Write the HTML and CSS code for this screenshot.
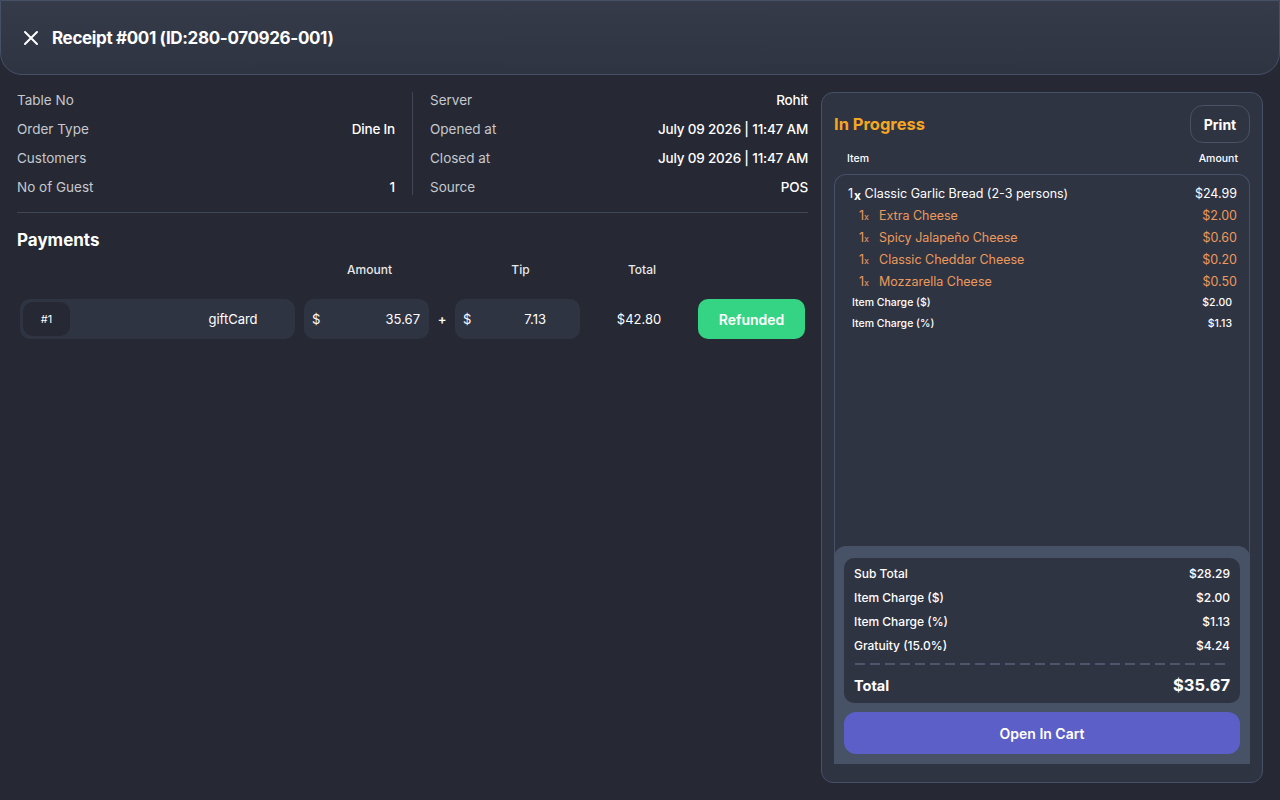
FILE: index.html
```html
<!DOCTYPE html>
<html>
<head>
    <meta name="viewport" content="width=device-width, initial-scale=1">
    <link rel="stylesheet" href="styles.css">
</head>

<body>
    <div class="header">
        <svg class="closeIcon" width="16" height="16" viewBox="0 0 16 16">
            <path d="M2 2 L14 14 M14 2 L2 14" stroke="#ffffff" stroke-width="2" stroke-linecap="round" />
        </svg>
        <span class="headerTitle">Receipt #001 (ID:280-070926-001)</span>
    </div>

    <div class="content">
        <div class="leftSide">
            <div class="infoGrid">
                <div class="infoCol">
                    <div class="infoRow"><span class="infoLabel">Table No</span><span class="infoValue"></span></div>
                    <div class="infoRow"><span class="infoLabel">Order Type</span><span class="infoValue">Dine In</span></div>
                    <div class="infoRow"><span class="infoLabel">Customers</span><span class="infoValue"></span></div>
                    <div class="infoRow"><span class="infoLabel">No of Guest</span><span class="infoValue">1</span></div>
                </div>
                <div class="infoDivider"></div>
                <div class="infoCol">
                    <div class="infoRow"><span class="infoLabel">Server</span><span class="infoValue">Rohit</span></div>
                    <div class="infoRow"><span class="infoLabel">Opened at</span><span class="infoValue">July 09 2026 | 11:47 AM</span></div>
                    <div class="infoRow"><span class="infoLabel">Closed at</span><span class="infoValue">July 09 2026 | 11:47 AM</span></div>
                    <div class="infoRow"><span class="infoLabel">Source</span><span class="infoValue">POS</span></div>
                </div>
            </div>

            <h2 class="sectionTitle">Payments</h2>

            <div class="payHead">
                <span class="colMethod"></span>
                <span class="colAmount">Amount</span>
                <span class="colPlus"></span>
                <span class="colTip">Tip</span>
                <span class="colTotal">Total</span>
                <span class="colStatus"></span>
            </div>
            <div class="payRow">
                <div class="colMethod methodBox">
                    <span class="payIndex">#1</span>
                    <span class="payMethod">giftCard</span>
                </div>
                <div class="colAmount moneyBox"><span>$</span><span>35.67</span></div>
                <div class="colPlus">+</div>
                <div class="colTip moneyBox tipBox"><span>$</span><span>7.13</span></div>
                <div class="colTotal">$42.80</div>
                <div class="colStatus"><button type="button" class="refundedButton">Refunded</button></div>
            </div>
        </div>

        <div class="orderPanel">
            <div class="panelTop">
                <span class="statusTitle">In Progress</span>
                <button type="button" class="printButton">Print</button>
            </div>
            <div class="listHead">
                <span>Item</span>
                <span>Amount</span>
            </div>
            <div class="listBox">
                <div class="itemList">
                    <div class="itemRow mainItem">
                        <span><span class="qty">1<b>x</b></span> Classic Garlic Bread (2-3 persons)</span>
                        <span>$24.99</span>
                    </div>
                    <div class="itemRow modItem">
                        <span><span class="modQty">1<small>x</small></span>Extra Cheese</span>
                        <span>$2.00</span>
                    </div>
                    <div class="itemRow modItem">
                        <span><span class="modQty">1<small>x</small></span>Spicy Jalapeño Cheese</span>
                        <span>$0.60</span>
                    </div>
                    <div class="itemRow modItem">
                        <span><span class="modQty">1<small>x</small></span>Classic Cheddar Cheese</span>
                        <span>$0.20</span>
                    </div>
                    <div class="itemRow modItem">
                        <span><span class="modQty">1<small>x</small></span>Mozzarella Cheese</span>
                        <span>$0.50</span>
                    </div>
                    <div class="itemRow chargeItem">
                        <span>Item Charge ($)</span>
                        <span>$2.00</span>
                    </div>
                    <div class="itemRow chargeItem">
                        <span>Item Charge (%)</span>
                        <span>$1.13</span>
                    </div>
                </div>

                <div class="summary">
                    <div class="summaryCard">
                        <div class="sumRow"><span>Sub Total</span><span>$28.29</span></div>
                        <div class="sumRow"><span>Item Charge ($)</span><span>$2.00</span></div>
                        <div class="sumRow"><span>Item Charge (%)</span><span>$1.13</span></div>
                        <div class="sumRow"><span>Gratuity (15.0%)</span><span>$4.24</span></div>
                        <div class="dashLine"></div>
                        <div class="totalRow"><span>Total</span><span class="totalValue">$35.67</span></div>
                    </div>
                    <button type="button" class="cartButton">Open In Cart</button>
                </div>
            </div>
        </div>
    </div>
</body>
</html>
```

FILE: styles.css
```css
* {
    box-sizing: border-box;
}

body {
    margin: 0;
    height: 800px;
    background: #262833;
    color: #ffffff;
    font-family: Inter, "Noto Sans", sans-serif;
    overflow: hidden;
}

button {
    font-family: inherit;
    cursor: pointer;
}

/* header */

.header {
    height: 75px;
    display: flex;
    align-items: center;
    gap: 13px;
    padding: 0 22px;
    background: linear-gradient(to bottom, #363b4a 0%, #2f3442 100%);
    border: 1px solid #465067;
    border-radius: 0 0 22px 22px;
}

.closeIcon {
    flex: none;
}

.headerTitle {
    font-size: 17px;
    font-weight: 700;
    letter-spacing: -0.35px;
}

/* main area */

.content {
    display: flex;
    gap: 13px;
    padding: 17px;
    height: 725px;
}

.leftSide {
    width: 791px;
    flex: none;
}

.infoGrid {
    display: flex;
    padding-bottom: 4px;
    border-bottom: 1px solid #3f4656;
}

.infoCol {
    flex: 1;
}

.infoDivider {
    width: 1px;
    background: #3f4656;
    margin: 0 17px 13px 17px;
}

.infoRow {
    display: flex;
    justify-content: space-between;
    height: 29px;
    line-height: 17px;
    font-size: 13.5px;
}

.infoLabel {
    color: #c5c8cf;
}

.infoValue {
    font-weight: 500;
    color: #ffffff;
    letter-spacing: -0.2px;
}

.sectionTitle {
    margin: 17px 0 0 0;
    font-size: 17px;
    font-weight: 700;
}

.payHead,
.payRow {
    display: flex;
    align-items: center;
    padding-left: 3px;
}

.payHead {
    margin-top: 9px;
    padding-left: 6px;
    height: 20px;
    font-size: 12px;
    font-weight: 500;
    color: #e6e8ec;
}

.payRow {
    margin-top: 20px;
    height: 40px;
    font-size: 13px;
}

.colMethod {
    width: 275px;
}

.colAmount {
    width: 125px;
    margin-left: 9px;
    text-align: center;
}

.colPlus {
    width: 26px;
    text-align: center;
    font-weight: 600;
}

.colTip {
    width: 125px;
    text-align: center;
}

.colTotal {
    width: 118px;
    text-align: center;
}

.colStatus {
    width: 107px;
    text-align: right;
}

.methodBox {
    height: 40px;
    display: flex;
    align-items: center;
    background: #2f3443;
    border-radius: 10px;
    padding: 3px;
}

.payIndex {
    width: 47px;
    height: 34px;
    line-height: 34px;
    border-radius: 10px;
    background: #262833;
    text-align: center;
    font-size: 11px;
}

.payMethod {
    flex: 1;
    text-align: center;
    padding-left: 104px;
}

.moneyBox {
    height: 40px;
    display: flex;
    align-items: center;
    justify-content: space-between;
    padding: 0 9px 0 8px;
    background: #2f3443;
    border-radius: 10px;
}

.tipBox {
    padding-right: 34px;
}

.refundedButton {
    width: 107px;
    height: 40px;
    border: none;
    border-radius: 10px;
    background: #34d484;
    color: #ffffff;
    font-size: 14px;
    font-weight: 600;
}

/* right panel */

.orderPanel {
    width: 442px;
    height: 691px;
    flex: none;
    display: flex;
    flex-direction: column;
    background: #2f3443;
    border: 1px solid #465067;
    border-radius: 12px;
    padding: 12px 12px 18px 12px;
}

.panelTop {
    display: flex;
    align-items: center;
    justify-content: space-between;
}

.statusTitle {
    color: #f5a623;
    font-size: 16.5px;
    font-weight: 700;
}

.printButton {
    width: 60px;
    height: 38px;
    background: transparent;
    border: 1px solid #495265;
    border-radius: 13px;
    color: #ffffff;
    font-size: 14px;
    font-weight: 700;
}

.listHead {
    display: flex;
    justify-content: space-between;
    padding: 2px 12px 0 13px;
    margin-top: 7px;
    height: 24px;
    font-size: 10.5px;
    font-weight: 500;
}

.listBox {
    flex: 1;
    display: flex;
    flex-direction: column;
    border: 1px solid #465067;
    border-bottom: none;
    border-radius: 12px 12px 0 0;
}

.itemList {
    flex: 1;
    padding: 11px 12px 0 13px;
}

.itemRow {
    display: flex;
    justify-content: space-between;
    white-space: nowrap;
}

.mainItem {
    height: 22px;
    font-size: 12.5px;
}

.qty b {
    font-size: 12px;
    font-weight: 700;
    position: relative;
    top: 2px;
    margin-left: 1px;
}

.modItem {
    height: 22px;
    font-size: 12.5px;
    color: #ec9a5c;
    padding-left: 11px;
}

.modQty {
    display: inline-block;
    width: 20px;
}

.modQty small {
    font-size: 9px;
}

.chargeItem {
    height: 21px;
    font-size: 10.5px;
    font-weight: 500;
    padding-left: 4px;
    padding-right: 5px;
}

.summary {
    margin: 0 -1px;
    background: #475266;
    border-radius: 12px 12px 0 0;
    padding: 12px 10px 10px 10px;
}

.summaryCard {
    background: #2f3443;
    border-radius: 10px;
    padding: 6px 10px 0 10px;
    height: 145px;
}

.sumRow {
    display: flex;
    justify-content: space-between;
    height: 24px;
    line-height: 20px;
    font-size: 12px;
    font-weight: 500;
}

.dashLine {
    height: 2px;
    margin: 3px 5px 0 1px;
    background: repeating-linear-gradient(to right, #4d566a 0, #4d566a 10px, transparent 10px, transparent 15px);
}

.totalRow {
    display: flex;
    justify-content: space-between;
    align-items: center;
    height: 38px;
    padding-top: 2px;
    font-size: 14.5px;
    font-weight: 700;
}

.totalValue {
    font-size: 16.5px;
}

.cartButton {
    display: block;
    width: 100%;
    height: 42px;
    margin-top: 9px;
    border: none;
    border-radius: 12px;
    background: #5c5fc7;
    color: #ffffff;
    font-size: 14px;
    font-weight: 600;
}
```
